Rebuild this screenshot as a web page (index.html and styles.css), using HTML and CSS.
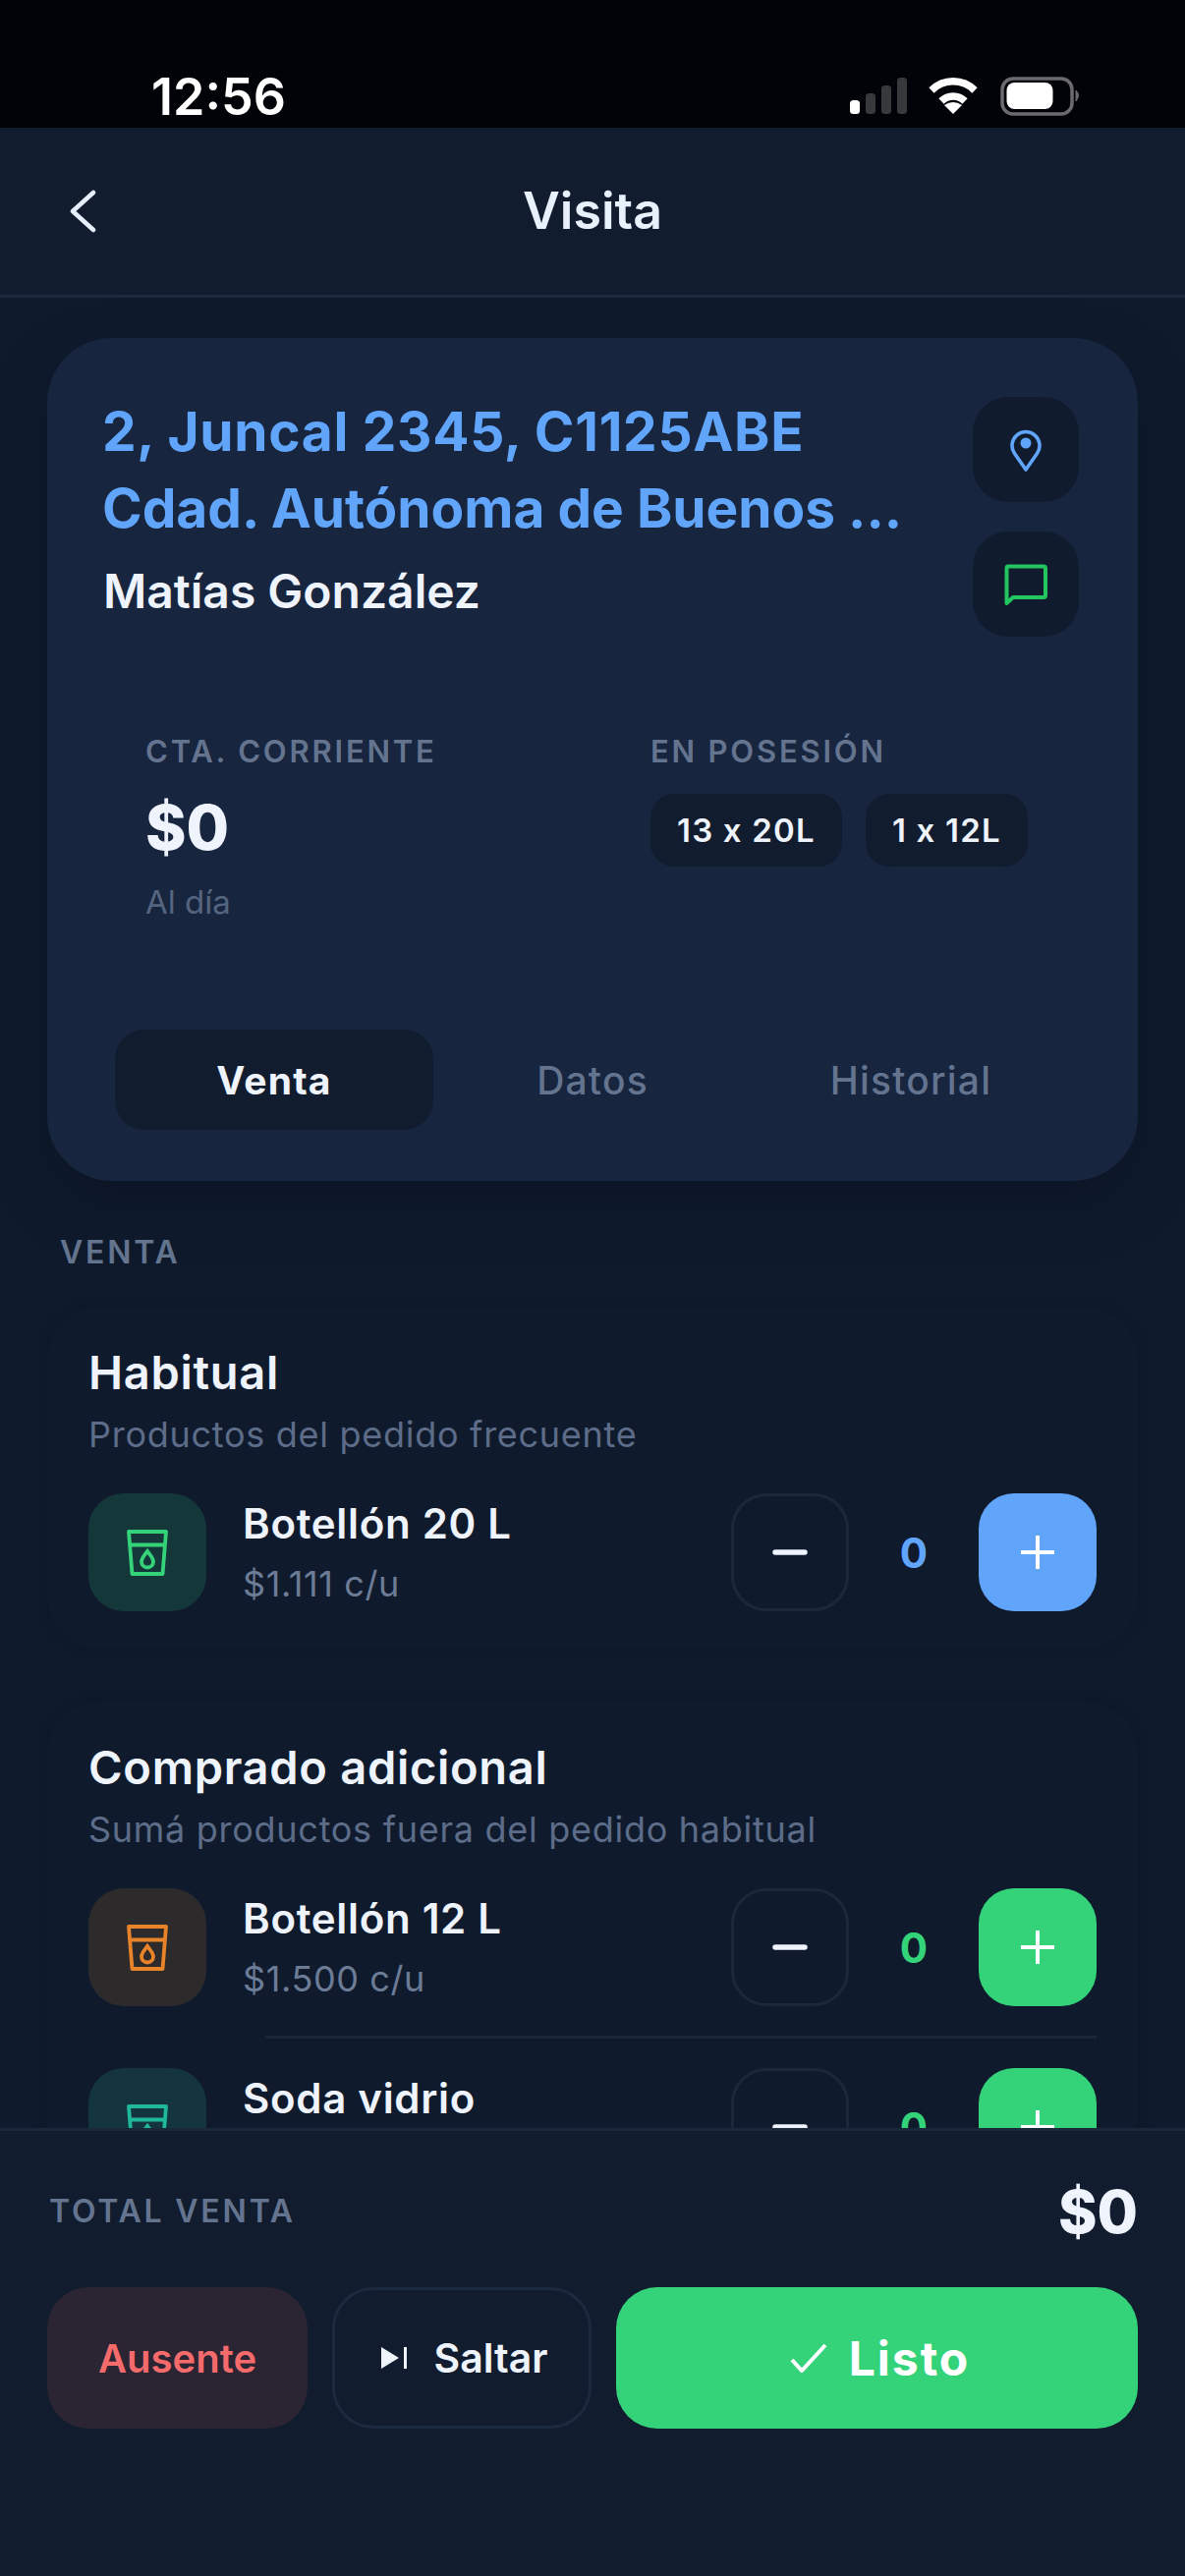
FILE: index.html
```html
<!DOCTYPE html>
<html lang="es">
<head>
<meta charset="utf-8">
<title>Visita</title>
<link rel="stylesheet" href="styles.css">
</head>
<body>
<div class="app">
  <div class="status">
    <span class="clock">12:56</span>
    <svg class="status-icons" viewBox="865 78 235 40" width="235" height="40">
      <rect x="865" y="102" width="10" height="14" rx="3.5" fill="#fff"/>
      <rect x="881" y="95" width="10" height="21" rx="3.5" fill="#38393b"/>
      <rect x="897" y="87" width="10" height="29" rx="3.5" fill="#38393b"/>
      <rect x="913" y="79" width="10" height="37" rx="3.5" fill="#38393b"/>
      <path d="M948 92A31 31 0 0 1 992 92M958 103A17 17 0 0 1 982 103" fill="none" stroke="#fff" stroke-width="7.5"/>
      <path d="M970 116L961 107Q970 101 979 107Z" fill="#fff"/>
      <rect x="1020" y="80" width="71" height="36" rx="11" fill="none" stroke="#6b6b6d" stroke-width="3.5"/>
      <rect x="1024.500" y="84" width="47" height="27" rx="8" fill="#fff"/>
      <path d="M1095 92Q1100 97 1095 103Z" fill="#6b6b6d" stroke="#6b6b6d" stroke-width="1"/>
    </svg>
  </div>
  <header class="topbar">
    <svg class="back" viewBox="0 0 28 44" width="28" height="44"><path d="M25 3L4 22L25 41" fill="none" stroke="#e6eefb" stroke-width="4.500" stroke-linecap="round" stroke-linejoin="round"/></svg>
    <h1 class="title">Visita</h1>
  </header>
  <main class="scroll">
    <section class="hero">
      <div class="hero-top">
        <div class="hero-text">
          <div class="address"><span class="address-first">2, Juncal 2345, C1125ABE</span><br>Cdad. Autónoma de Buenos ...</div>
          <div class="client">Matías González</div>
        </div>
        <div class="hero-actions">
          <button class="icon-btn">
            <svg viewBox="0 0 32 45" width="32" height="45"><path d="M16 43L4.500 26.500A14 14 0 1 1 27.500 26.500Z" fill="none" stroke="#60a5fa" stroke-width="3.600" stroke-linejoin="round"/><circle cx="16" cy="16" r="5.500" fill="#60a5fa"/></svg>
          </button>
          <button class="icon-btn">
            <svg viewBox="0 0 44 42" width="44" height="42"><path d="M4 2.500H40Q42 2.500 42 4.500V32Q42 34 40 34H9L2.500 40V4.500Q2.500 2.500 4 2.500Z" fill="none" stroke="#22c55e" stroke-width="4" stroke-linejoin="round"/></svg>
          </button>
        </div>
      </div>
      <div class="stats">
        <div class="stat stat-account">
          <div class="caps">CTA. CORRIENTE</div>
          <div class="balance">$0</div>
          <div class="balance-note">Al día</div>
        </div>
        <div class="stat">
          <div class="caps">EN POSESIÓN</div>
          <div class="chips">
            <span class="chip">13 x 20L</span>
            <span class="chip">1 x 12L</span>
          </div>
        </div>
      </div>
      <nav class="tabs">
        <span class="tab tab-active">Venta</span>
        <span class="tab">Datos</span>
        <span class="tab">Historial</span>
      </nav>
    </section>

    <div class="caps caps-large section-label">VENTA</div>

    <section class="panel">
      <h2 class="panel-title">Habitual</h2>
      <p class="panel-sub">Productos del pedido frecuente</p>
      <div class="row">
        <div class="thumb thumb-green">
          <svg viewBox="0 0 42 47" width="42" height="47"><path d="M2 2H40L36.500 45H5.500Z M4 15.500H38" fill="none" stroke="#34d37a" stroke-width="3.800" stroke-linejoin="round"/><path d="M21 22C24 26 27 29 27 32.500A6 6 0 0 1 15 32.500C15 29 18 26 21 22Z" fill="none" stroke="#34d37a" stroke-width="3.800"/></svg>
        </div>
        <div class="info"><div class="name">Botellón 20 L</div><div class="price">$1.111 c/u</div></div>
        <div class="stepper">
          <button class="step step-minus"><svg viewBox="0 0 36 6" width="36" height="6"><path d="M3 3H33" stroke="#eef3fc" stroke-width="5.500" stroke-linecap="round"/></svg></button>
          <span class="count count-blue">0</span>
          <button class="step step-blue"><svg viewBox="0 0 36 36" width="36" height="36"><path d="M18 1V35M1 18H35" stroke="#fff" stroke-width="4"/></svg></button>
        </div>
      </div>
    </section>

    <section class="panel">
      <h2 class="panel-title">Comprado adicional</h2>
      <p class="panel-sub">Sumá productos fuera del pedido habitual</p>
      <div class="row">
        <div class="thumb thumb-orange">
          <svg viewBox="0 0 42 47" width="42" height="47"><path d="M2 2H40L36.500 45H5.500Z M4 15.500H38" fill="none" stroke="#e8832a" stroke-width="3.800" stroke-linejoin="round"/><path d="M21 22C24 26 27 29 27 32.500A6 6 0 0 1 15 32.500C15 29 18 26 21 22Z" fill="none" stroke="#e8832a" stroke-width="3.800"/></svg>
        </div>
        <div class="info"><div class="name">Botellón 12 L</div><div class="price">$1.500 c/u</div></div>
        <div class="stepper">
          <button class="step step-minus"><svg viewBox="0 0 36 6" width="36" height="6"><path d="M3 3H33" stroke="#eef3fc" stroke-width="5.500" stroke-linecap="round"/></svg></button>
          <span class="count count-green">0</span>
          <button class="step step-green"><svg viewBox="0 0 36 36" width="36" height="36"><path d="M18 1V35M1 18H35" stroke="#fff" stroke-width="4"/></svg></button>
        </div>
      </div>
      <div class="divider"></div>
      <div class="row">
        <div class="thumb thumb-teal">
          <svg viewBox="0 0 42 47" width="42" height="47"><path d="M2 2H40L36.500 45H5.500Z M4 15.500H38" fill="none" stroke="#1fb89a" stroke-width="3.800" stroke-linejoin="round"/><path d="M21 22C24 26 27 29 27 32.500A6 6 0 0 1 15 32.500C15 29 18 26 21 22Z" fill="none" stroke="#1fb89a" stroke-width="3.800"/></svg>
        </div>
        <div class="info"><div class="name">Soda vidrio</div><div class="price"></div></div>
        <div class="stepper">
          <button class="step step-minus"><svg viewBox="0 0 36 6" width="36" height="6"><path d="M3 3H33" stroke="#eef3fc" stroke-width="5.500" stroke-linecap="round"/></svg></button>
          <span class="count count-green">0</span>
          <button class="step step-green"><svg viewBox="0 0 36 36" width="36" height="36"><path d="M18 1V35M1 18H35" stroke="#fff" stroke-width="4"/></svg></button>
        </div>
      </div>
    </section>
  </main>
  <footer class="footer">
    <div class="total">
      <span class="caps caps-large">TOTAL VENTA</span>
      <span class="total-value">$0</span>
    </div>
    <div class="actions">
      <button class="action action-absent">Ausente</button>
      <button class="action action-skip">
        <svg viewBox="0 0 26 22" width="26" height="22"><path d="M0 0L18 11L0 22Z" fill="#eef3fc"/><path d="M24.500 0V22" stroke="#eef3fc" stroke-width="3"/></svg>
        Saltar
      </button>
      <button class="action action-done">
        <svg viewBox="0 0 38 30" width="38" height="30"><path d="M2 17L12 28L36 2" fill="none" stroke="#fff" stroke-width="4"/></svg>
        Listo
      </button>
    </div>
  </footer>
</div>
</body>
</html>
```
FILE: styles.css
```css
* { box-sizing: border-box; }
html, body { margin: 0; padding: 0; background: #111c2e; }
body { font-family: Inter, "Liberation Sans", sans-serif; color: #eef3fc; }
h1, h2, p { margin: 0; }
button { font-family: inherit; border: 0; padding: 0; background: none; color: inherit; }

.app { width: 1206px; height: 2622px; display: flex; flex-direction: column; overflow: hidden; }

.status {
  height: 130px; flex: none; background: #020308;
  display: flex; align-items: flex-end; justify-content: space-between;
  padding: 0 106px 12px 154px;
}
.clock { font-size: 52px; line-height: 58px; font-weight: 600; color: #fff; margin-bottom: -10px; }
.status-icons { display: block; }

.topbar {
  height: 173px; flex: none; background: #111c2e; border-bottom: 3px solid #1b2a3f;
  display: flex; align-items: center; justify-content: center; position: relative;
}
.back { position: absolute; left: 70px; top: 63px; }
.title { font-size: 52px; font-weight: 600; line-height: 60px; color: #e8f0fc; margin-top: -1px; }

.scroll { flex: 1; min-height: 0; overflow: hidden; background: #0f1b2d; padding: 41px 48px 0; display: flex; flex-direction: column; }

.hero {
  flex: none; height: 858px; background: #17253f; border-radius: 66px; padding: 50px 60px 52px 56px;
  box-shadow: 0 24px 60px rgba(5, 12, 22, .35); display: flex; flex-direction: column;
}
.hero-top { display: flex; justify-content: space-between; height: 246px; margin-top: 8px; }
.address { font-size: 55px; line-height: 78px; font-weight: 700; color: #60a5fa; margin-top: -2px; }
.address-first { letter-spacing: .7px; }
.client { font-size: 48px; line-height: 60px; font-weight: 600; color: #eef3fc; margin-top: 16px; margin-left: 1px; }
.hero-actions { display: flex; flex-direction: column; gap: 30px; margin-top: 2px; }
.icon-btn { width: 108px; height: 108px; border-radius: 36px; background: #101c2e; display: flex; align-items: center; justify-content: center; }

.stats { display: flex; margin-top: 98px; padding-left: 44px; }
.stat-account { width: 514px; }
.caps { font-size: 31px; line-height: 38px; font-weight: 600; letter-spacing: 2.8px; color: #64748f; }
.caps-large { font-size: 32px; }
.balance { font-size: 63px; line-height: 72px; font-weight: 800; color: #eef3fc; margin-top: 22px; }
.balance-note { font-size: 33px; line-height: 40px; color: #55657f; margin-top: 20px; }
.chips { display: flex; gap: 24px; margin-top: 24px; }
.chip { height: 74px; padding: 0 27px; border-radius: 24px; background: #111c2e; font-size: 33px; line-height: 74px; font-weight: 600; letter-spacing: 1.2px; color: #eef3fc; }

.tabs { display: grid; grid-template-columns: repeat(3, 1fr); margin: auto 9px 0 13px; }
.tab { height: 102px; line-height: 104px; text-align: center; font-size: 39px; font-weight: 500; letter-spacing: 1.200px; color: #64748f; }
.tab-active { background: #111c2e; border-radius: 30px; color: #eef3fc; font-weight: 700; }

.section-label { margin: 54px 0 0 13px; }

.panel { flex: none; border-radius: 54px; background: #0f1b2d; box-shadow: 0 0 14px rgba(9, 16, 28, .35); padding: 40px 42px 38px; margin-bottom: 54px; }
.section-label + .panel { margin-top: 36px; }
.panel-title { font-size: 47px; line-height: 54px; font-weight: 600; letter-spacing: .7px; color: #eef3fc; }
.panel-sub { font-size: 36px; line-height: 44px; color: #5d6c88; letter-spacing: .72px; margin-top: 14px; }

.row { display: flex; align-items: center; height: 120px; margin-top: 38px; }
.divider + .row { margin-top: 30px; }
.divider { height: 3px; background: #1a2739; margin: 30px 0 0 180px; }
.thumb { width: 120px; height: 120px; border-radius: 36px; display: flex; align-items: center; justify-content: center; flex: none; }
.thumb-green { background: #14373a; }
.thumb-orange { background: #2d2a2c; }
.thumb-teal { background: #14353d; }
.info { flex: 1; min-width: 0; margin-left: 37px; }
.name { font-size: 42px; line-height: 48px; font-weight: 600; letter-spacing: .7px; color: #eef3fc; }
.price { font-size: 36px; line-height: 44px; min-height: 44px; letter-spacing: .6px; color: #6d7c96; margin-top: 15px; }

.stepper { display: flex; align-items: center; }
.step { width: 120px; height: 120px; border-radius: 36px; display: flex; align-items: center; justify-content: center; }
.step-minus { border: 3px solid #1c2839; }
.step-blue { background: #60a5fa; }
.step-green { background: #34d37a; }
.count { width: 132px; text-align: center; font-size: 42px; font-weight: 700; }
.count-blue { color: #60a5fa; }
.count-green { color: #34d37a; }

.footer { height: 456px; flex: none; background: #111c2e; border-top: 3px solid #1a283c; padding: 0 48px; }
.total { display: flex; justify-content: space-between; align-items: center; height: 84px; margin-top: 40px; }
.total .caps { margin-left: 2px; }
.total-value { font-size: 60px; line-height: 72px; font-weight: 800; color: #eef3fc; }
.actions { display: flex; gap: 25px; margin-top: 35px; height: 144px; }
.action { height: 144px; border-radius: 42px; display: flex; align-items: center; justify-content: center; font-size: 39px; font-weight: 600; }
.action-absent { width: 265px; background: #2b2433; color: #f56b6b; font-size: 40px; }
.action-skip { width: 264px; border: 3px solid #1c2a3f; color: #eef3fc; gap: 27px; font-size: 41px; padding-left: 6px; }
.action-done { flex: 1; background: #34d37a; color: #fff; font-size: 48px; font-weight: 700; letter-spacing: 2px; gap: 22px; padding-left: 6px; }
```
